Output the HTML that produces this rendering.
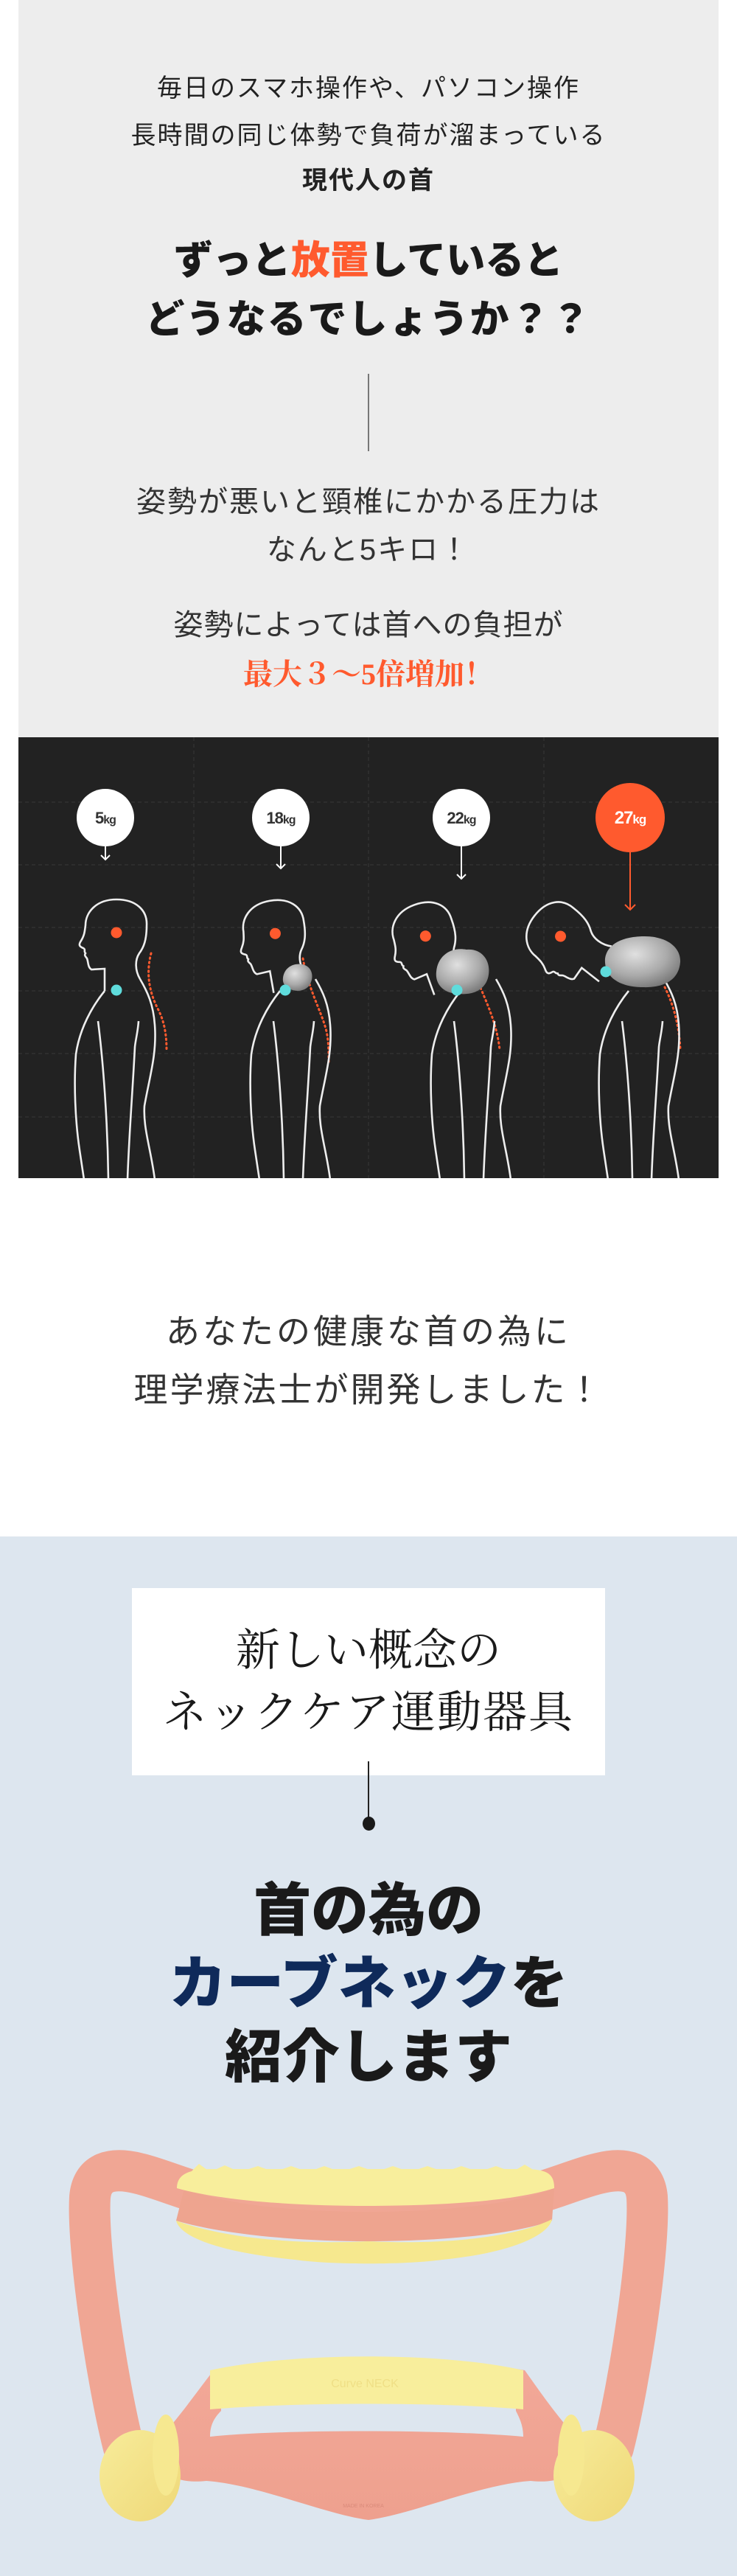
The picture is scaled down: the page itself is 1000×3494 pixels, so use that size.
<!DOCTYPE html>
<html><head><meta charset="utf-8">
<style>
html,body{margin:0;padding:0;}
body{width:1000px;height:3494px;position:relative;background:#fff;overflow:hidden;font-family:"Liberation Sans","Noto Sans CJK JP",sans-serif;}
.t{position:absolute;left:0;width:1000px;text-align:center;white-space:nowrap;}
#gray{position:absolute;left:25px;top:0;width:950px;height:1000px;background:#ededed;}
#blue{position:absolute;left:0;top:2084px;width:1000px;height:1410px;background:#dde6ef;}
</style></head><body>
<div id="gray"></div>
<div class="t" style="top:97px;font-size:34px;line-height:46px;color:#222;letter-spacing:2px;">毎日のスマホ操作や、パソコン操作</div>
<div class="t" style="top:161px;font-size:34px;line-height:46px;color:#222;letter-spacing:2px;">長時間の同じ体勢で負荷が溜まっている</div>
<div class="t" style="top:222px;font-size:34px;line-height:46px;color:#222;font-weight:bold;letter-spacing:2px;">現代人の首</div>
<div class="t" style="top:322px;font-size:53px;line-height:64px;color:#1a1a1a;font-weight:900;">ずっと<span style="color:#ff5a2e">放置</span>していると</div>
<div class="t" style="top:402px;font-size:53px;line-height:64px;color:#1a1a1a;font-weight:900;letter-spacing:2px;">どうなるでしょうか？？</div>
<div style="position:absolute;left:499px;top:507px;width:2px;height:105px;background:#777;"></div>
<div class="t" style="top:656px;font-size:40px;line-height:50px;color:#333;letter-spacing:2px;">姿勢が悪いと頸椎にかかる圧力は</div>
<div class="t" style="top:721px;font-size:40px;line-height:50px;color:#333;letter-spacing:2px;">なんと5キロ！</div>
<div class="t" style="top:823px;font-size:40px;line-height:50px;color:#333;letter-spacing:1px;">姿勢によっては首への負担が</div>
<div class="t" style="top:889px;font-size:40px;line-height:52px;color:#ff5a2e;font-weight:bold;font-family:'Liberation Serif','Noto Serif CJK SC',serif;">最大３～5倍増加！</div>

<svg style="position:absolute;left:0;top:1000px" width="1000" height="598" viewBox="0 0 1000 598">
<defs>
<radialGradient id="rock" cx="40%" cy="35%" r="70%"><stop offset="0" stop-color="#e0e0e0"/><stop offset="0.6" stop-color="#aaa"/><stop offset="1" stop-color="#777"/></radialGradient>
<linearGradient id="ln" x1="0" y1="0" x2="0" y2="1"><stop offset="0" stop-color="#f07050"/><stop offset="1" stop-color="#7ddcdc"/></linearGradient>
<g id="head">
<path d="M142,344 L142,314 L124,315 C119,312 120,305 118,300 C116,297 114,296 116,293 C113,290 117,288 113,286 C108,284 106,282 110,276 C115,268 115,262 116,255 C116,238 130,220 158,220 C185,220 200,235 199,255 C199,275 195,285 189,293 C183,302 183,316 190,328" fill="none" stroke="#eee" stroke-width="2.6"/>
<line x1="158" y1="265" x2="158" y2="343" stroke="url(#ln)" stroke-width="1.6"/>
<circle cx="158" cy="265" r="7.5" fill="#ff5a2e"/>
</g>
<g id="body" fill="none" stroke="#eee" stroke-width="2.6">
<path d="M190,328 C200,345 208,362 210,390 C213,430 203,460 196,500 C194,530 205,560 210,600"/>
<path d="M142,344 C125,365 108,395 103,430 C100,470 102,520 108,560 L114,600"/>
<path d="M133,385 C140,440 146,520 147,600"/>
<path d="M188,385 C187,400 184,410 183,420 C180,480 175,540 173,600"/>
</g>
</defs>
<rect x="25" y="0" width="950" height="598" fill="#222"/>
<g stroke="#383838" stroke-width="1" stroke-dasharray="5,4">
<line x1="263" y1="0" x2="263" y2="598"/><line x1="500" y1="0" x2="500" y2="598"/><line x1="738" y1="0" x2="738" y2="598"/>
<line x1="25" y1="88" x2="975" y2="88"/><line x1="25" y1="173" x2="975" y2="173"/><line x1="25" y1="258" x2="975" y2="258"/><line x1="25" y1="344" x2="975" y2="344"/><line x1="25" y1="429" x2="975" y2="429"/><line x1="25" y1="515" x2="975" y2="515"/>
</g>
<g font-family="Liberation Sans, sans-serif" font-weight="bold" text-anchor="middle">
<circle cx="143" cy="109" r="39" fill="#fff"/><text x="143" y="117" font-size="22" fill="#333" letter-spacing="-1">5<tspan font-size="16">kg</tspan></text>
<circle cx="381" cy="109" r="39" fill="#fff"/><text x="381" y="117" font-size="22" fill="#333" letter-spacing="-1">18<tspan font-size="16">kg</tspan></text>
<circle cx="626" cy="109" r="39" fill="#fff"/><text x="626" y="117" font-size="22" fill="#333" letter-spacing="-1">22<tspan font-size="16">kg</tspan></text>
<circle cx="855" cy="109" r="47" fill="#ff5a2e"/><text x="855" y="117" font-size="24" fill="#fff" letter-spacing="-1">27<tspan font-size="17">kg</tspan></text>
</g>
<g fill="none" stroke-width="2">
<path d="M143,148 V166 M137,160 L143,166 L149,160" stroke="#fff"/>
<path d="M381,148 V178 M375,172 L381,178 L387,172" stroke="#fff"/>
<path d="M626,148 V192 M620,186 L626,192 L632,186" stroke="#fff"/>
<path d="M855,156 V234 M848,227 L855,234 L862,227" stroke="#ff5a2e"/>
</g>
<g fill="none" stroke="#ff5a2e" stroke-width="3" stroke-dasharray="1.5,4.5" stroke-linecap="round">
<path d="M205,293 C198,320 202,345 215,370 C225,390 226,410 226,426"/>
<path d="M411,300 C418,340 435,370 442,395 C446,410 446,425 446,440"/>
<path d="M652,340 C665,370 675,395 678,424"/>
<path d="M902,339 C915,365 922,395 923,424"/>
</g>
<use href="#body"/>
<g><use href="#head"/><circle cx="158" cy="343" r="7.5" fill="#5fdcdc"/></g>
<g transform="translate(238,0)"><use href="#body"/></g>
<g transform="translate(387,343) rotate(-10) translate(-158,-343)"><use href="#head"/></g>
<path d="M384,326 C386,312 398,306 410,308 C422,310 426,322 422,332 C418,344 404,346 394,342 C386,338 383,333 384,326Z" fill="url(#rock)"/>
<circle cx="387" cy="343" r="7.5" fill="#5fdcdc"/>
<g transform="translate(483,0)"><use href="#body"/></g>
<g transform="translate(604,343) rotate(-20) translate(-158,-343)"><use href="#head"/></g>
<path d="M592,318 C594,296 612,284 633,288 C653,286 666,302 663,322 C660,343 641,350 623,348 C602,348 590,335 592,318Z" fill="url(#rock)"/>
<circle cx="620" cy="343" r="7.5" fill="#5fdcdc"/>
<g transform="translate(711,0)"><use href="#body"/></g>
<g transform="translate(822,318) rotate(-52) translate(-158,-343)"><use href="#head"/></g>
<path d="M821,300 C824,280 845,270 875,270 C905,270 924,285 923,305 C921,330 900,340 872,339 C845,339 819,328 821,300Z" fill="url(#rock)"/>
<circle cx="822" cy="318" r="7.5" fill="#5fdcdc"/>
</svg>

<div class="t" style="top:1778px;font-size:46px;line-height:56px;color:#333;letter-spacing:4px;">あなたの健康な首の為に</div>
<div class="t" style="top:1857px;font-size:46px;line-height:56px;color:#333;letter-spacing:3px;">理学療法士が開発しました！</div>

<div id="blue"></div>
<div style="position:absolute;left:179px;top:2154px;width:642px;height:254px;background:#fff;"></div>
<div class="t" style="top:2204px;font-size:60px;line-height:70px;color:#1a1a1a;font-family:'Liberation Serif','Noto Serif CJK SC',serif;">新しい概念の</div>
<div class="t" style="top:2288px;font-size:60px;line-height:70px;color:#1a1a1a;font-family:'Liberation Serif','Noto Serif CJK SC',serif;letter-spacing:2px;">ネックケア運動器具</div>
<div style="position:absolute;left:499px;top:2389px;width:1.5px;height:82px;background:#222;"></div>
<div style="position:absolute;left:492px;top:2464px;width:17px;height:19px;border-radius:50%;background:#1a1a1a;"></div>
<div class="t" style="top:2546px;font-size:78px;line-height:90px;color:#1a1a1a;font-weight:900;">首の為の</div>
<div class="t" style="top:2645px;font-size:78px;line-height:90px;color:#1a1a1a;font-weight:900;"><span style="color:#0f2a5a">カーブネック</span>を</div>
<div class="t" style="top:2745px;font-size:78px;line-height:90px;color:#1a1a1a;font-weight:900;">紹介します</div>

<svg style="position:absolute;left:0;top:2850px" width="1000" height="644" viewBox="0 0 1000 644">
<defs>
<linearGradient id="yl" x1="0" y1="0" x2="1" y2="1"><stop offset="0" stop-color="#f7ec9a"/><stop offset="1" stop-color="#efd878"/></linearGradient>
<linearGradient id="pk" x1="0" y1="0" x2="0" y2="1"><stop offset="0" stop-color="#f2a898"/><stop offset="1" stop-color="#eea08e"/></linearGradient>
</defs>
<path d="M168,470 C145,380 118,200 122,130 C125,98 148,88 188,98 C240,110 300,150 500,160 C700,150 760,110 812,98 C852,88 875,98 878,130 C882,200 855,380 832,470" fill="none" stroke="#f0a694" stroke-width="56" stroke-linecap="round"/>
<path d="M250,118 C300,140 400,150 500,150 C600,150 700,140 752,118 L749,162 C700,180 600,190 500,190 C400,190 300,180 239,162Z" fill="#eea48f"/>
<path d="M239,162 C300,185 400,195 500,190 C600,195 700,185 749,160 C745,180 700,205 600,215 C550,222 450,222 400,215 C300,205 245,185 239,162Z" fill="#f6e88e"/>
<path d="M240,118 C240,98 258,92 290,92 L710,92 C742,92 752,98 752,118 C700,135 600,142 500,142 C400,142 300,135 240,118Z" fill="#f8ee9c"/>
<path d="M255,100 L270,85 L285,96 L305,87 L325,96 L350,88 L372,96 L395,88 L418,96 L440,88 L462,96 L487,88 L510,96 L533,88 L556,96 L580,88 L603,96 L626,88 L650,96 L673,88 L695,96 L712,86 L735,100 Z" fill="#f8ee9c"/>
<path d="M215,460 C250,420 270,390 290,365 L300,363 L300,420 C290,430 285,440 285,455 C380,445 600,445 710,455 C710,440 705,430 700,420 L700,363 L712,365 C730,390 750,420 785,460 C790,500 770,520 720,515 C650,520 560,560 500,568 C440,560 350,520 280,515 C230,520 210,500 215,460Z" fill="url(#pk)"/>
<path d="M285,365 C400,340 600,340 710,365 L710,418 C600,408 400,408 285,418Z" fill="#f8ee9c"/>
<ellipse cx="190" cy="508" rx="55" ry="62" fill="url(#yl)"/>
<ellipse cx="806" cy="508" rx="55" ry="62" fill="url(#yl)"/>
<ellipse cx="225" cy="480" rx="18" ry="55" fill="#f6e890"/>
<ellipse cx="775" cy="480" rx="18" ry="55" fill="#f6e890"/>
<text x="495" y="388" font-family="Liberation Sans, sans-serif" font-size="16" fill="#efdf86" text-anchor="middle">Curve NECK</text>
<text x="493" y="551" font-family="Liberation Sans, sans-serif" font-size="7" fill="#d98a7a" text-anchor="middle">MADE IN KOREA</text>
</svg>
</body></html>
